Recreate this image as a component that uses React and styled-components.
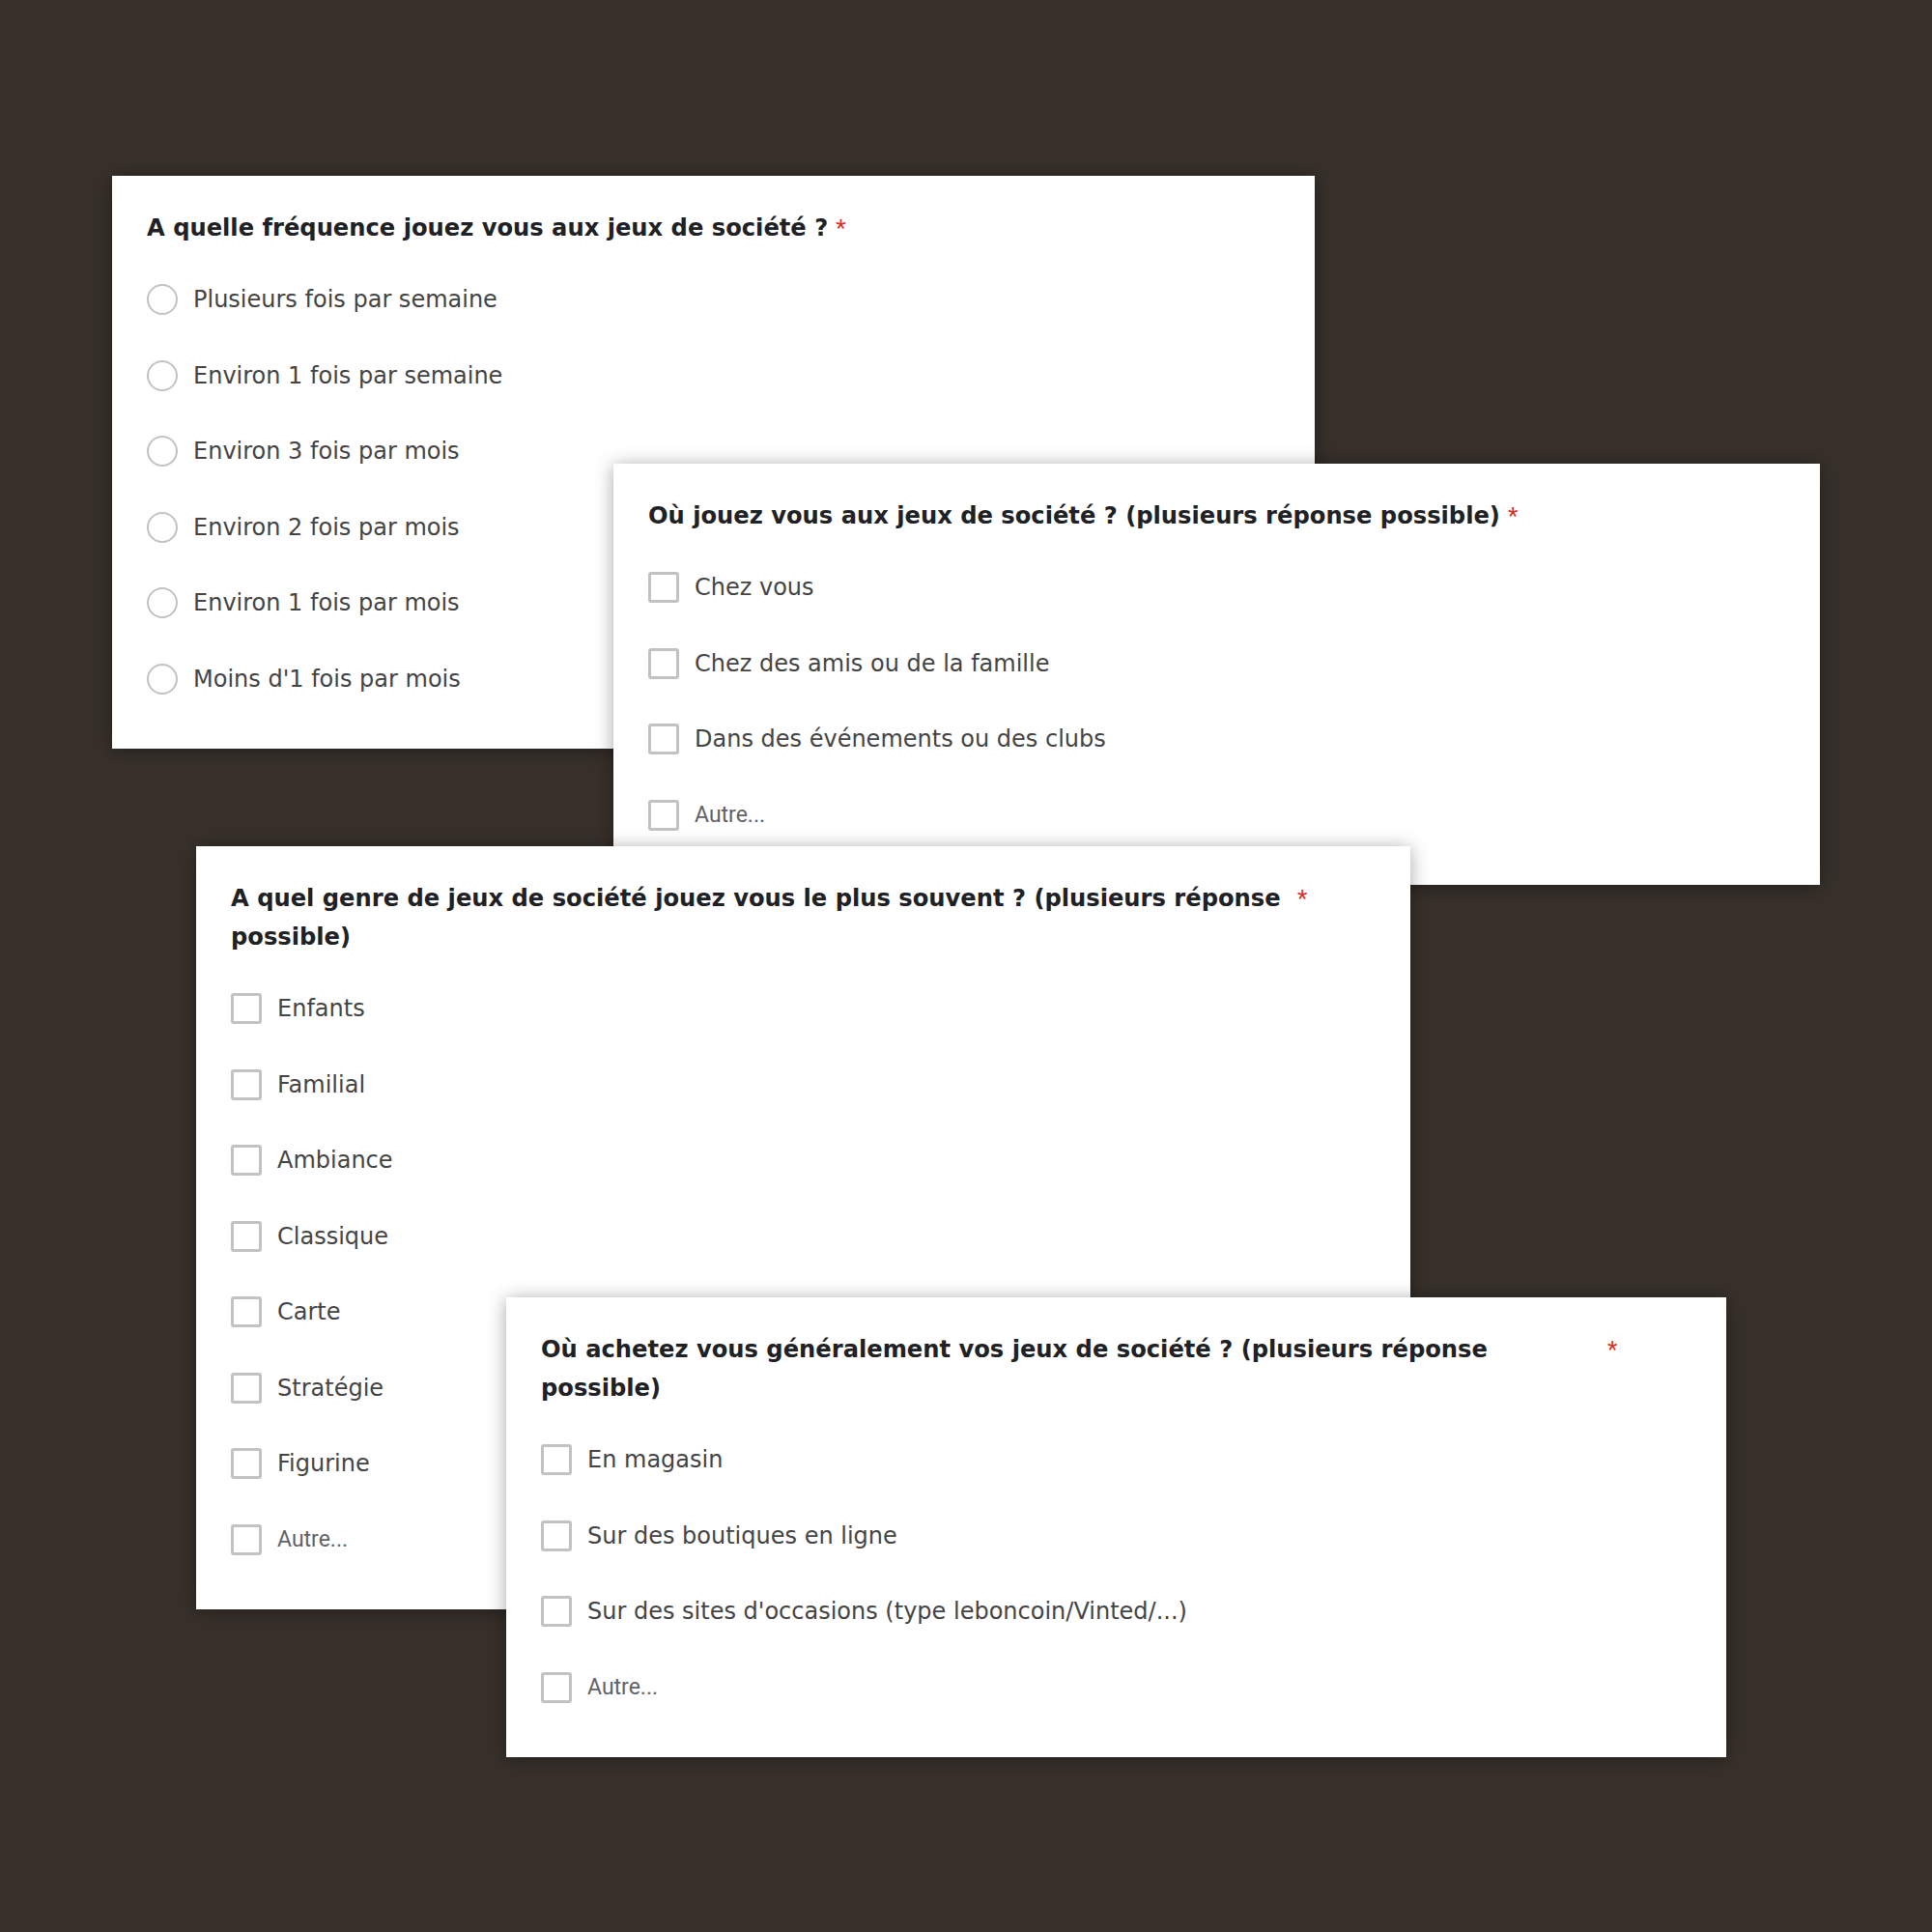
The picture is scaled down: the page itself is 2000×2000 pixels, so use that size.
import React from "react";
import styled, { createGlobalStyle } from "styled-components";

const GlobalStyle = createGlobalStyle`
  html, body {
    margin: 0;
    padding: 0;
    background: #37302b;
  }
`;

// free canvas: the question cards are pasted over each other
const Canvas = styled.main`
  position: relative;
  width: 2000px;
  height: 2000px;
  background: #37302b;
  overflow: hidden;
  font-family: "DejaVu Sans", "Noto Sans", sans-serif;
`;

const Card = styled.section`
  position: absolute;
  left: ${({ $x }) => $x}px;
  top: ${({ $y }) => $y}px;
  width: ${({ $w }) => $w}px;
  box-sizing: border-box;
  padding: 34px 36px 33px;
  background: #ffffff;
  box-shadow: 0 2px 18px rgba(0, 0, 0, 0.35);
`;

const TitleRow = styled.div`
  display: flex;
  align-items: flex-start;
  margin-bottom: 15px;
`;

const Title = styled.h2`
  margin: 0;
  max-width: 1096px;
  font-size: 24.2px;
  line-height: 40px;
  font-weight: 700;
  color: #202124;
`;

const Required = styled.span`
  margin-left: 8px;
  font-family: "Roboto", sans-serif;
  font-size: 24px;
  line-height: 40px;
  color: #d93025;
`;

const List = styled.ul`
  list-style: none;
  margin: 0;
  padding: 0;
`;

const Option = styled.li`
  display: flex;
  align-items: center;
  height: 78.5px;
  gap: 16px;
`;

const Radio = styled.span`
  flex: none;
  width: 32px;
  height: 32px;
  box-sizing: border-box;
  border: 2.5px solid #c2c2c2;
  border-radius: 50%;
`;

const Check = styled.span`
  flex: none;
  width: 32px;
  height: 32px;
  box-sizing: border-box;
  border: 3px solid #c2c2c2;
  border-radius: 3px;
`;

const Label = styled.span`
  font-size: 24px;
  color: #444444;
`;

const OtherLabel = styled.span`
  font-family: "Roboto", sans-serif;
  font-size: 23px;
  color: #5f6368;
`;

const questions = [
  {
    x: 116,
    y: 182,
    w: 1245,
    radio: true,
    title: "A quelle fréquence jouez vous aux jeux de société ?",
    options: [
      "Plusieurs fois par semaine",
      "Environ 1 fois par semaine",
      "Environ 3 fois par mois",
      "Environ 2 fois par mois",
      "Environ 1 fois par mois",
      "Moins d'1 fois par mois",
    ],
  },
  {
    x: 635,
    y: 480,
    w: 1249,
    title: "Où jouez vous aux jeux de société ? (plusieurs réponse possible)",
    options: ["Chez vous", "Chez des amis ou de la famille", "Dans des événements ou des clubs"],
    other: true,
  },
  {
    x: 203,
    y: 876,
    w: 1257,
    title: "A quel genre de jeux de société jouez vous le plus souvent ? (plusieurs réponse possible)",
    options: ["Enfants", "Familial", "Ambiance", "Classique", "Carte", "Stratégie", "Figurine"],
    other: true,
  },
  {
    x: 524,
    y: 1343,
    w: 1263,
    title: "Où achetez vous généralement vos jeux de société ? (plusieurs réponse possible)",
    options: ["En magasin", "Sur des boutiques en ligne", "Sur des sites d'occasions (type leboncoin/Vinted/...)"],
    other: true,
  },
];

const Question = ({ q }) => (
  <Card $x={q.x} $y={q.y} $w={q.w}>
    <TitleRow>
      <Title>{q.title}</Title>
      <Required>*</Required>
    </TitleRow>
    <List>
      {q.options.map((opt) => (
        <Option key={opt}>
          {q.radio ? <Radio /> : <Check />}
          <Label>{opt}</Label>
        </Option>
      ))}
      {q.other && (
        <Option>
          <Check />
          <OtherLabel>Autre...</OtherLabel>
        </Option>
      )}
    </List>
  </Card>
);

export default function App() {
  return (
    <>
      <GlobalStyle />
      <Canvas>
        {questions.map((q) => (
          <Question key={q.title} q={q} />
        ))}
      </Canvas>
    </>
  );
}
